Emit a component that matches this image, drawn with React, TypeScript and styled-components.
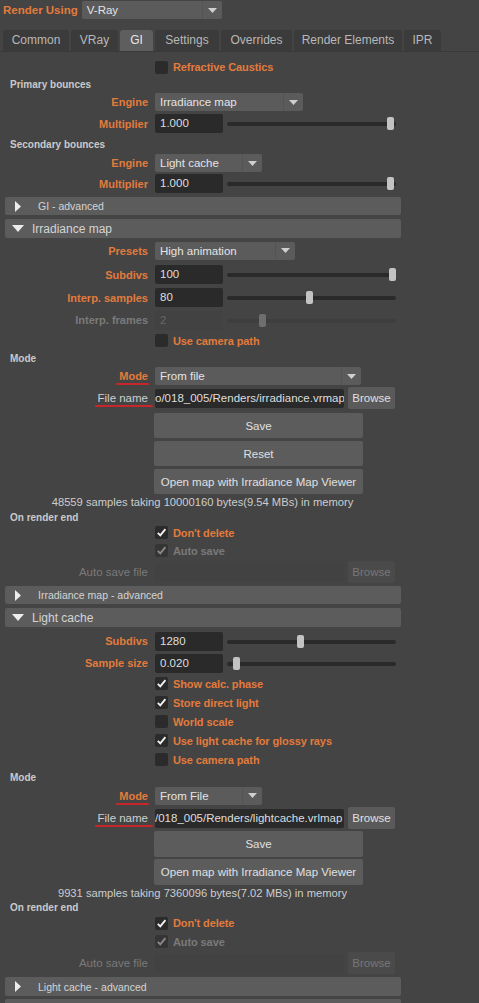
import React from "react";
import styled, { createGlobalStyle } from "styled-components";

const ORANGE = "#e27b3c";

const GlobalStyle = createGlobalStyle`
  html, body {
    margin: 0;
    padding: 0;
    background: #444444;
  }
  body {
    font-family: "Liberation Sans", Arial, sans-serif;
    font-size: 11px;
    color: #d2d2d2;
  }
`;

type Tone = "orange" | "plain" | "muted";

const toneColor = (t: Tone) =>
  t === "orange" ? ORANGE : t === "muted" ? "#7a7a7a" : "#cfcfcf";

const Page = styled.div`
  width: 479px;
  min-height: 1003px;
  overflow: hidden;
  background: #444444;
`;

const TopBar = styled.div`
  display: flex;
  align-items: center;
  gap: 4px;
  height: 20px;
  padding-left: 3px;
`;

const TopLabel = styled.span`
  color: ${ORANGE};
  font-weight: bold;
  font-size: 11.5px;
`;

const TabBar = styled.div`
  display: flex;
  gap: 2px;
  height: 21px;
  margin-top: 10px;
  padding-left: 3px;
  border-bottom: 1px solid #393939;
`;

const Tab = styled.div<{ $active?: boolean; $w: number }>`
  width: ${(p) => p.$w}px;
  text-align: center;
  line-height: 21px;
  font-size: 12px;
  border-radius: 3px 3px 0 0;
  background: ${(p) => (p.$active ? "#5e5e5e" : "#3b3b3b")};
  color: ${(p) => (p.$active ? "#e6e6e6" : "#b8b8b8")};
`;

const Content = styled.div`
  display: flex;
  flex-direction: column;
  padding-top: 5px;
`;

const Row = styled.div<{ $h: number }>`
  display: grid;
  grid-template-columns: 148px auto;
  column-gap: 7px;
  align-items: center;
  height: ${(p) => p.$h}px;
`;

const Label = styled.span<{ $tone?: Tone; $bold?: boolean }>`
  justify-self: end;
  white-space: nowrap;
  font-size: ${(p) => (p.$bold === false ? 11.5 : 11)}px;
  font-weight: ${(p) => (p.$bold === false ? "normal" : "bold")};
  color: ${(p) => toneColor(p.$tone ?? "orange")};
  position: relative;
`;

const Marked = styled.span<{ $l: number; $r: number }>`
  position: relative;
  &::after {
    content: "";
    position: absolute;
    left: ${(p) => p.$l}px;
    right: ${(p) => p.$r}px;
    bottom: -3px;
    height: 2px;
    border-radius: 1px;
    background: #c7262a;
  }
`;

const Controls = styled.div`
  display: flex;
  align-items: center;
  gap: 4px;
`;

const Drop = styled.div<{ $w: number }>`
  display: flex;
  width: ${(p) => p.$w}px;
  height: 18px;
  background: #5b5b5b;
  border-radius: 2px;
`;

const DropText = styled.span`
  flex: 1;
  padding-left: 5px;
  line-height: 18px;
  font-size: 11.5px;
  color: #e4e4e4;
  white-space: nowrap;
  overflow: hidden;
`;

const DropArrow = styled.span`
  width: 19px;
  display: flex;
  align-items: center;
  justify-content: center;
  border-left: 1px solid #545454;
`;

const Field = styled.div<{ $w: number; $off?: boolean }>`
  width: ${(p) => p.$w}px;
  height: 19px;
  box-sizing: border-box;
  padding: 0 5px;
  border-radius: 2px;
  line-height: 19px;
  font-size: 11.5px;
  background: ${(p) => (p.$off ? "#424242" : "#2a2a2a")};
  color: ${(p) => (p.$off ? "#686868" : "#dedede")};
  white-space: nowrap;
  overflow: hidden;
`;

const PathField = styled(Field)`
  text-align: right;
  padding: 0 4px 0 0;
`;

const SliderBox = styled.div<{ $off?: boolean }>`
  position: relative;
  width: 169px;
  height: 13px;
  &::before {
    content: "";
    position: absolute;
    left: 0;
    right: 0;
    top: 5px;
    height: 4px;
    border-radius: 2px;
    background: ${(p) => (p.$off ? "#3e3e3e" : "#2a2a2a")};
  }
`;

const Thumb = styled.span<{ $off?: boolean }>`
  position: absolute;
  top: 0;
  width: 7px;
  height: 13px;
  border-radius: 2px;
  background: ${(p) => (p.$off ? "#6e6e6e" : "#c3c3c3")};
`;

const Box = styled.span<{ $off?: boolean }>`
  width: 13px;
  height: 13px;
  border-radius: 2px;
  display: flex;
  align-items: center;
  justify-content: center;
  background: ${(p) => (p.$off ? "#353535" : "#2b2b2b")};
`;

const CheckLine = styled.div`
  display: flex;
  align-items: center;
  gap: 5px;
`;

const CheckText = styled.span<{ $tone: Tone }>`
  font-weight: bold;
  font-size: 11px;
  letter-spacing: -0.1px;
  color: ${(p) => toneColor(p.$tone)};
`;

const Heading = styled.div<{ $h: number }>`
  display: flex;
  align-items: center;
  height: ${(p) => p.$h}px;
  padding-left: 10px;
  font-size: 10px;
  font-weight: bold;
  color: #cacaca;
`;

const Bar = styled.div<{ $h: number; $open?: boolean; $mt: number }>`
  display: flex;
  align-items: center;
  gap: ${(p) => (p.$open ? 8 : 17)}px;
  width: 396px;
  height: ${(p) => p.$h}px;
  margin: ${(p) => p.$mt}px 0 0 5px;
  padding-left: ${(p) => (p.$open ? 7 : 10)}px;
  box-sizing: border-box;
  border-radius: 2px;
  background: #5c5c5c;
  color: #d4d4d4;
  font-size: ${(p) => (p.$open ? 12 : 10.5)}px;
`;

const Stack = styled.div<{ $gap: number; $pt: number }>`
  display: flex;
  flex-direction: column;
  gap: ${(p) => p.$gap}px;
  padding-top: ${(p) => p.$pt}px;
  margin-left: 154px;
`;

const Button = styled.div<{ $h: number }>`
  width: 209px;
  height: ${(p) => p.$h}px;
  display: flex;
  align-items: center;
  justify-content: center;
  border-radius: 2px;
  background: #5c5c5c;
  color: #e0e0e0;
  font-size: 11.5px;
`;

const Browse = styled.div<{ $off?: boolean }>`
  width: 47px;
  height: 22px;
  display: flex;
  align-items: center;
  justify-content: center;
  border-radius: 2px;
  background: ${(p) => (p.$off ? "#4a4a4a" : "#5a5a5a")};
  color: ${(p) => (p.$off ? "#777777" : "#e0e0e0")};
  font-size: 11.5px;
`;

const Info = styled.div<{ $h: number }>`
  width: 405px;
  height: ${(p) => p.$h}px;
  display: flex;
  align-items: center;
  justify-content: center;
  font-size: 11.2px;
  color: #cdcdcd;
`;

const Arrow = () => (
  <svg width="9" height="5" viewBox="0 0 9 5">
    <path d="M0 0 H9 L4.5 5 Z" fill="#cfcfcf" />
  </svg>
);

const Tick = ({ off }: { off?: boolean }) => (
  <svg width="11" height="11" viewBox="0 0 11 11">
    <path
      d="M1.8 5.8 L4.3 8.3 L9.4 2.2"
      fill="none"
      stroke={off ? "#8a8a8a" : "#f2f2f2"}
      strokeWidth="1.9"
    />
  </svg>
);

const Dropdown = ({ w, text }: { w: number; text: string }) => (
  <Drop $w={w}>
    <DropText>{text}</DropText>
    <DropArrow>
      <Arrow />
    </DropArrow>
  </Drop>
);

const Slider = ({ at, off }: { at: number; off?: boolean }) => (
  <SliderBox $off={off}>
    <Thumb $off={off} style={{ left: `${at * 162}px` }} />
  </SliderBox>
);

const NumRow = ({
  h,
  label,
  value,
  at,
  off,
}: {
  h: number;
  label: string;
  value: string;
  at: number;
  off?: boolean;
}) => (
  <Row $h={h}>
    <Label $tone={off ? "muted" : "orange"}>{label}</Label>
    <Controls>
      <Field $w={68} $off={off}>
        {value}
      </Field>
      <Slider at={at} off={off} />
    </Controls>
  </Row>
);

const DropRow = ({
  h,
  label,
  w,
  text,
  marked,
}: {
  h: number;
  label: string;
  w: number;
  text: string;
  marked?: boolean;
}) => (
  <Row $h={h}>
    <Label>{marked ? <Marked $l={-3} $r={-1}>{label}</Marked> : label}</Label>
    <Dropdown w={w} text={text} />
  </Row>
);

const Check = ({
  h,
  text,
  on,
  off,
}: {
  h: number;
  text: string;
  on?: boolean;
  off?: boolean;
}) => (
  <Row $h={h}>
    <span />
    <CheckLine>
      <Box $off={off}>{on && <Tick off={off} />}</Box>
      <CheckText $tone={off ? "muted" : "orange"}>{text}</CheckText>
    </CheckLine>
  </Row>
);

const FileRow = ({ path }: { path: string }) => (
  <Row $h={24}>
    <Label $tone="plain" $bold={false}>
      <Marked $l={-3} $r={-5}>File name</Marked>
    </Label>
    <Controls>
      <PathField $w={189}>{path}</PathField>
      <Browse>Browse</Browse>
    </Controls>
  </Row>
);

const AutoSaveFile = () => (
  <Row $h={24}>
    <Label $tone="muted" $bold={false}>
      Auto save file
    </Label>
    <Controls>
      <Field $w={189} $off />
      <Browse $off>Browse</Browse>
    </Controls>
  </Row>
);

const SectionBar = ({
  title,
  open,
  h,
  mt,
}: {
  title: string;
  open?: boolean;
  h: number;
  mt: number;
}) => (
  <Bar $h={h} $open={open} $mt={mt}>
    {open ? (
      <svg width="12" height="7" viewBox="0 0 12 7">
        <path d="M0 0 H12 L6 7 Z" fill="#ececec" />
      </svg>
    ) : (
      <svg width="6" height="11" viewBox="0 0 6 11">
        <path d="M0 0 L6 5.5 L0 11 Z" fill="#ececec" />
      </svg>
    )}
    <span>{title}</span>
  </Bar>
);

const tabs: [string, number][] = [
  ["Common", 66],
  ["VRay", 47],
  ["GI", 33],
  ["Settings", 64],
  ["Overrides", 71],
  ["Render Elements", 108],
  ["IPR", 37],
];

export default function App() {
  return (
    <Page>
      <GlobalStyle />
      <TopBar>
        <TopLabel>Render Using</TopLabel>
        <Dropdown w={140} text="V-Ray" />
      </TopBar>
      <TabBar>
        {tabs.map(([t, w]) => (
          <Tab key={t} $w={w} $active={t === "GI"}>
            {t}
          </Tab>
        ))}
      </TabBar>

      <Content>
        <Check h={20} text="Refractive Caustics" />
        <Heading $h={15}>Primary bounces</Heading>
        <DropRow h={20} label="Engine" w={148} text="Irradiance map" />
        <NumRow h={23} label="Multiplier" value="1.000" at={0.99} />
        <Heading $h={19}>Secondary bounces</Heading>
        <DropRow h={18} label="Engine" w={107} text="Light cache" />
        <NumRow h={23} label="Multiplier" value="1.000" at={0.99} />

        <SectionBar title="GI - advanced" h={18} mt={2} />
        <SectionBar title="Irradiance map" open h={19} mt={4} />

        <DropRow h={25} label="Presets" w={140} text="High animation" />
        <NumRow h={23} label="Subdivs" value="100" at={1} />
        <NumRow h={23} label="Interp. samples" value="80" at={0.49} />
        <NumRow h={22} label="Interp. frames" value="2" at={0.2} off />
        <Check h={19} text="Use camera path" />
        <Heading $h={16}>Mode</Heading>
        <DropRow h={20} label="Mode" w={206} text="From file" marked />
        <FileRow path="o/018_005/Renders/irradiance.vrmap" />
        <Stack $gap={3} $pt={3}>
          <Button $h={25}>Save</Button>
          <Button $h={25}>Reset</Button>
          <Button $h={25}>Open map with Irradiance Map Viewer</Button>
        </Stack>
        <Info $h={16}>48559 samples taking 10000160 bytes(9.54 MBs) in memory</Info>
        <Heading $h={14}>On render end</Heading>
        <Check h={17} text="Don't delete" on />
        <Check h={19} text="Auto save" on off />
        <AutoSaveFile />

        <SectionBar title="Irradiance map - advanced" h={18} mt={2} />
        <SectionBar title="Light cache" open h={19} mt={4} />

        <div style={{ height: 3 }} />
        <NumRow h={22} label="Subdivs" value="1280" at={0.43} />
        <NumRow h={22} label="Sample size" value="0.020" at={0.04} />
        <Check h={19} text="Show calc. phase" on />
        <Check h={19} text="Store direct light" on />
        <Check h={19} text="World scale" />
        <Check h={19} text="Use light cache for glossy rays" on />
        <Check h={19} text="Use camera path" />
        <Heading $h={16}>Mode</Heading>
        <DropRow h={21} label="Mode" w={107} text="From File" marked />
        <FileRow path="/018_005/Renders/lightcache.vrlmap" />
        <Stack $gap={2} $pt={1}>
          <Button $h={26}>Save</Button>
          <Button $h={26}>Open map with Irradiance Map Viewer</Button>
        </Stack>
        <Info $h={16}>9931 samples taking 7360096 bytes(7.02 MBs) in memory</Info>
        <Heading $h={13}>On render end</Heading>
        <Check h={18} text="Don't delete" on />
        <Check h={19} text="Auto save" on off />
        <AutoSaveFile />

        <SectionBar title="Light cache - advanced" h={19} mt={2} />
        <SectionBar title="" h={19} mt={3} />
      </Content>
    </Page>
  );
}
